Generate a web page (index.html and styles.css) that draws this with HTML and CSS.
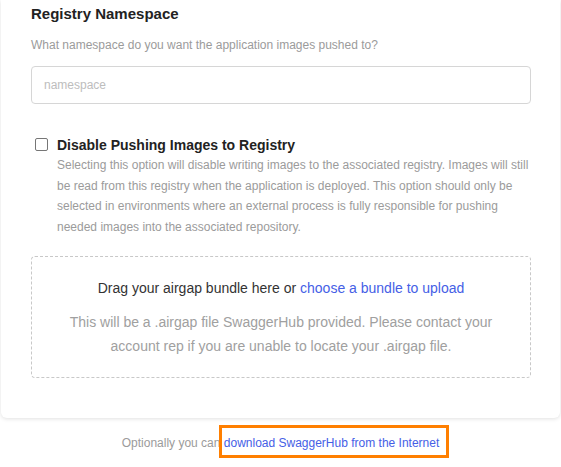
FILE: index.html
```html
<!DOCTYPE html>
<html>
<head>
<meta charset="utf-8">
<link rel="stylesheet" href="styles.css">
</head>
<body>
<div class="card">
  <h3 class="title">Registry Namespace</h3>
  <p class="help">What namespace do you want the application images pushed to?</p>
  <input class="field" type="text" placeholder="namespace">
  <div class="check-row">
    <span class="box"></span>
    <div class="check-text">
      <div class="check-label">Disable Pushing Images to Registry</div>
      <p class="check-desc">Selecting this option will disable writing images to the associated registry. Images will still be read from this registry when the application is deployed. This option should only be selected in environments where an external process is fully responsible for pushing needed images into the associated repository.</p>
    </div>
  </div>
  <div class="drop">
    <p class="drop-main">Drag your airgap bundle here or <a class="link">choose a bundle to upload</a></p>
    <p class="drop-sub">This will be a .airgap file SwaggerHub provided. Please contact your account rep if you are unable to locate your .airgap file.</p>
  </div>
</div>
<p class="footer">Optionally you can <a class="link hl">download SwaggerHub from the Internet</a></p>
</body>
</html>
```
FILE: styles.css
```css
html, body { margin: 0; padding: 0; background: #fff; }
body { font-family: "Liberation Sans", Arial, sans-serif; color: #333; padding-bottom: 24px; }
.card {
  margin: 0 1px;
  background: #fff;
  border-radius: 0 0 6px 6px;
  box-shadow: 0 1px 4px rgba(0,0,0,0.12);
  padding: 4px 29px 40px 30px;
}
.title { margin: 0; font-size: 15px; line-height: 19px; font-weight: bold; color: #222; }
.help { margin: 14px 0 0; font-size: 12px; line-height: 16px; color: #9b9b9b; }
.field {
  display: block; box-sizing: border-box; width: 100%; height: 38px; margin-top: 13px;
  border: 1px solid #d6d6d6; border-radius: 4px; padding: 0 12px;
  font-family: inherit; font-size: 12px; color: #333; outline: none;
}
.field::placeholder { color: #bdbdbd; }
.check-row { display: flex; align-items: flex-start; margin-top: 33px; }
.box {
  flex: none; width: 11px; height: 11px; border: 1px solid #767676; border-radius: 2px;
  margin: 1px 9px 0 4px; background: #fff;
}
.check-label { font-size: 14px; line-height: 16px; font-weight: bold; color: #222; }
.check-desc { margin: 2px 0 0; font-size: 12px; line-height: 20.6px; color: #9b9b9b; }
.drop {
  margin-top: 19px; border: 1px dashed #c8c8c8; border-radius: 4px;
  text-align: center; padding: 21px 30px 19px;
}
.drop-main { margin: 0; font-size: 14px; line-height: 20px; color: #333; }
.drop-sub { margin: 12px 0 0; font-size: 14px; line-height: 24px; color: #a0a0a0; }
.link { color: #4560e6; text-decoration: none; }
.footer { margin: 17px 0 0; text-align: center; font-size: 12px; line-height: 16px; color: #9b9b9b; }
.hl { position: relative; }
.hl::after {
  content: ""; position: absolute; left: -5px; right: -10px; top: -11px; bottom: -8px;
  border: 3px solid #ff7f00;
}
```
